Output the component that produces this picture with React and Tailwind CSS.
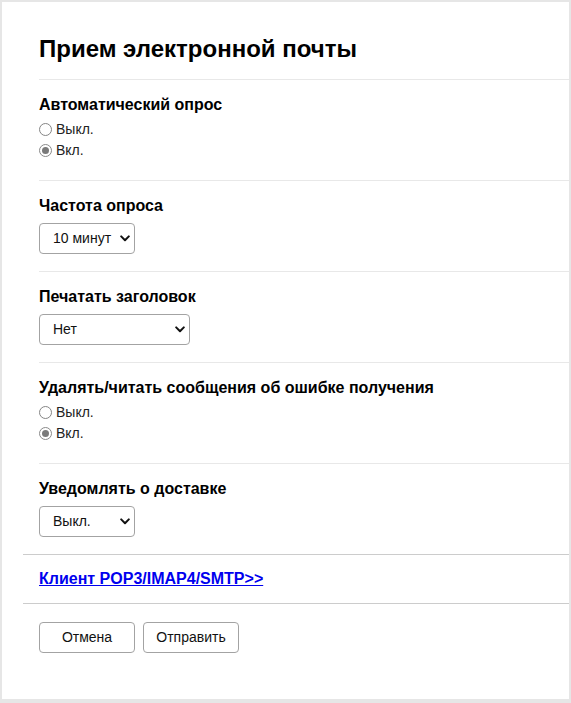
import React from 'react';

const Radio = ({ label, checked }) => (
  <label className="flex items-center h-[21px] text-[14px] text-[#222]">
    <span
      className={`w-[13px] h-[13px] rounded-full border flex items-center justify-center mr-[4px] ${
        checked ? 'border-[#8a8a8a]' : 'border-[#858585]'
      }`}
    >
      {checked && <span className="w-[7px] h-[7px] rounded-full bg-[#7a7a7a]" />}
    </span>
    <span>{label}</span>
  </label>
);

const Select = ({ value, width }) => (
  <div
    className={`mt-[7px] h-[31px] ${width} border border-[#a3a3a3] rounded-[4px] flex items-center justify-between pl-[13px] pr-[4px] text-[14px] text-[#111]`}
  >
    <span>{value}</span>
    <svg width="10" height="7" viewBox="0 0 10 7" fill="none">
      <path d="M1.2 1.4 5 5.2l3.8-3.8" stroke="#111" strokeWidth="2" strokeLinecap="round" strokeLinejoin="round" />
    </svg>
  </div>
);

const Section = ({ title, children, last }) => (
  <section className={`ml-[37px] pt-[15px] ${last ? 'pb-[17px]' : 'border-b border-[#e8e8e8]'}`}>
    <h3 className="text-[16px] leading-[20px] font-bold text-black">{title}</h3>
    {children}
  </section>
);

export default function App() {
  return (
    <div className="bg-[#e6e6e6] p-[2px] min-h-[703px]" style={{ fontFamily: '"Liberation Sans", Arial, sans-serif' }}>
      <div className="bg-white w-[567px] h-[697px]">
        <div className="ml-[37px] pt-[33px] pb-[16px] border-b border-[#e8e8e8]">
          <h1 className="text-[24px] leading-[28px] font-bold text-black">Прием электронной почты</h1>
        </div>

        <Section title="Автоматический опрос">
          <div className="mt-[4px] pb-[19px]">
            <Radio label="Выкл." />
            <Radio label="Вкл." checked />
          </div>
        </Section>

        <Section title="Частота опроса">
          <div className="pb-[17px]">
            <Select value="10 минут" width="w-[96px]" />
          </div>
        </Section>

        <Section title="Печатать заголовок">
          <div className="pb-[17px]">
            <Select value="Нет" width="w-[151px]" />
          </div>
        </Section>

        <Section title="Удалять/читать сообщения об ошибке получения">
          <div className="mt-[4px] pb-[19px]">
            <Radio label="Выкл." />
            <Radio label="Вкл." checked />
          </div>
        </Section>

        <Section title="Уведомлять о доставке" last>
          <Select value="Выкл." width="w-[96px]" />
        </Section>

        <div className="ml-[21px] border-t border-b border-[#cccccc] pt-[14px] pb-[14px] leading-[20px]">
          <a href="#" className="block ml-[16px] text-[16px] leading-[20px] font-bold text-[#0000ee] underline">
            Клиент POP3/IMAP4/SMTP&gt;&gt;
          </a>
        </div>

        <div className="ml-[37px] mt-[18px] flex gap-[8px]">
          <button className="w-[96px] h-[31px] border border-[#a3a3a3] rounded-[4px] text-[14px] text-[#111]">Отмена</button>
          <button className="w-[96px] h-[31px] border border-[#a3a3a3] rounded-[4px] text-[14px] text-[#111]">Отправить</button>
        </div>
      </div>
    </div>
  );
}
